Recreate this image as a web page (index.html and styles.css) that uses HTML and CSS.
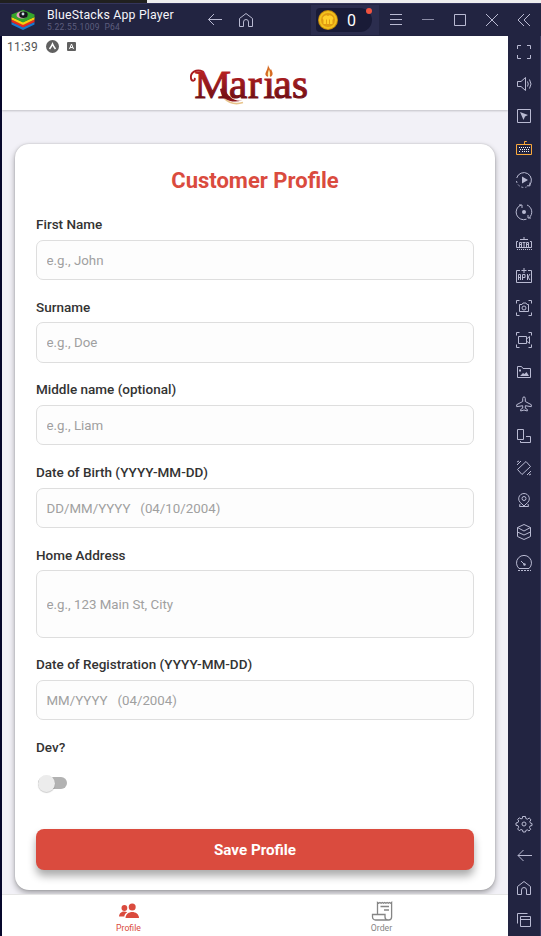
FILE: index.html
```html
<!DOCTYPE html>
<html lang="en">
<head>
<meta charset="utf-8">
<title>BlueStacks App Player</title>
<link rel="stylesheet" href="styles.css">
</head>
<body>
<div class="desktop-strip"></div>
<header class="titlebar">
  <svg class="bs-logo" width="24" height="22" viewBox="0 0 24 22"><path d="M.5 13v2.500L12 21l11.500-5.500V13L12 18z" fill="#1679cf"/><path d="M.5 10.500V13L12 18.500 23.500 13v-2.500L12 15.500z" fill="#e52b20"/><path d="M.5 8v2.500L12 16l11.500-5.500V8L12 13z" fill="#f7cf10"/><path d="M.5 5.500V8L12 13.500 23.500 8V5.500L12 .8z" fill="#35a52c"/><ellipse cx="11" cy="6" rx="5.500" ry="3.600" fill="#e9a1c2"/><ellipse cx="12.500" cy="5.700" rx="4.300" ry="3.200" fill="#14161c"/><circle cx="12" cy="5" r="1.400" fill="#cfe1e7"/></svg>
  <div class="app-id"><div class="app-name">BlueStacks App Player</div><div class="app-version">5.22.55.1009&nbsp; P64</div></div>
  <div class="history">
    <svg width="16" height="16" viewBox="0 0 16 16"><path d="M1.500 7.500h13.500M7 2L1.500 7.500 7 13"/></svg>
    <svg width="16" height="16" viewBox="0 0 16 16"><path d="M1.500 14.500v-8L8 1.500l6.500 5v8h-4V10a2.500 2.500 0 0 0-5 0v4.500z"/></svg>
  </div>
  <div class="coins"><div class="coin-pill">
    <svg width="20" height="20" viewBox="0 0 20 20"><circle cx="10" cy="10" r="10" fill="#c58a0c"/><circle cx="10" cy="10" r="9" fill="#f2c21d"/><circle cx="10" cy="10" r="7" fill="#df9b13"/><path d="M4.500 8q1.500-3 4-2.800L10 6l1.500-.8q2.500-.2 4 2.800l-1 2v4h-2.600V9.500H11V14H9V9.500h-.9V14H5.500v-4z" fill="#ffd02a"/></svg>
    <span>0</span></div><i class="alert-dot"></i></div>
  <div class="window-controls">
    <svg width="14" height="14" viewBox="0 0 14 14"><path d="M1 1.500h12M1 6.500h12M1 11.500h12"/></svg>
    <svg width="14" height="14" viewBox="0 0 14 14"><path d="M1 6.500h12" opacity=".7"/></svg>
    <svg width="14" height="14" viewBox="0 0 14 14"><path d="M1.500 1.500h11v11h-11z"/></svg>
    <svg width="14" height="14" viewBox="0 0 14 14"><path d="M1 1l12 12M13 1L1 13"/></svg>
    <svg width="14" height="14" viewBox="0 0 14 14"><path d="M7 1L1 7l6 6M13 1L7 7l6 6"/></svg>
  </div>
</header>
<div class="workspace">
  <main class="phone">
    <div class="app-header">
      <div class="status"><span>11:39</span>
        <svg width="13" height="13" viewBox="0 0 13 13"><circle cx="6.500" cy="6.500" r="6.500" fill="#606060"/><path d="M3.500 9Q5.300 6.800 6.500 4q1.200 2.800 3 5" fill="none" stroke="#fff" stroke-width="1.600"/></svg>
        <svg width="9" height="9" viewBox="0 0 9 9"><rect width="9" height="9" rx="1" fill="#606060"/><path d="M2.500 7l2-5 2 5M3.200 5.500h2.600" fill="none" stroke="#fff"/></svg>
      </div>
      <svg class="brand" width="126" height="52" viewBox="0 -5 126 52">
        <defs><linearGradient id="wine" x1="0" y1="0" x2="0" y2="1"><stop offset=".25" stop-color="#b62022"/><stop offset=".8" stop-color="#741016"/></linearGradient></defs>
        <path d="M34 30c2 9 12 12.500 21 9.500" fill="none" stroke="#e8c48b" stroke-width="1.600"/>
        <path d="M15 8.500C8 5.500 2 9.500 3 15.500c.5 3 4.200 2.800 3.800.2" fill="none" stroke="#aa1c1f" stroke-width="1.900" stroke-linecap="round"/>
        <path d="M32 26c1 10 11 15 22 11.500-8 1-15-4-17.500-13z" fill="#8d151a"/>
        <text class="brand-text" x="6.500 41 60 75.500 85.500 104" y="34.500" fill="url(#wine)" stroke="url(#wine)">Marias</text>
        <path d="M75 2h12v12.500H75z" fill="#fff"/>
        <path d="M79.500 14c-5-3 .5-6 .5-12 1 3 2 3 2 5l1-1c2 4 2.500 6-.5 8l-1.500-3z" fill="#d66b22"/><path d="M81 6.500c1 3 2 5 0 7.500-2-2-1-5 0-7.500z" fill="#fff0b1"/>
      </svg>
    </div>
    <div class="content">
      <form class="card">
        <h1>Customer Profile</h1>
        <label class="field"><span>First Name</span><input placeholder="e.g., John"></label>
        <label class="field"><span>Surname</span><input placeholder="e.g., Doe"></label>
        <label class="field"><span>Middle name (optional)</span><input placeholder="e.g., Liam"></label>
        <label class="field"><span>Date of Birth (YYYY-MM-DD)</span><input placeholder="DD/MM/YYYY &nbsp; (04/10/2004)"></label>
        <label class="field address"><span>Home Address</span><input placeholder="e.g., 123 Main St, City"></label>
        <label class="field"><span>Date of Registration (YYYY-MM-DD)</span><input placeholder="MM/YYYY &nbsp; (04/2004)"></label>
        <div class="field dev"><span>Dev?</span><div class="switch"></div></div>
        <button type="button">Save Profile</button>
      </form>
    </div>
    <nav class="tabs">
      <a class="tab active"><svg width="20" height="16" viewBox="0 0 20 16"><g fill="currentColor"><circle cx="13.200" cy="4" r="3.500"/><path d="M6.500 15c.3-8 13.200-8 13.500 0z"/><circle cx="5.400" cy="5" r="2.900"/><path d="M0 13.500C.5 8.500 5 7.700 8.300 9.300 6 10.500 5.600 12 5.300 13.500z"/></g></svg><span>Profile</span></a>
      <a class="tab"><svg width="22" height="20" viewBox="0 0 22 20"><path d="M6.500 13V1.500l1.200.8 1.200-.8 1.200.8 1.200-.8 1.200.8 1.200-.8 1.200.8 1.200-.8 1.200.8 1.200-.8 1.200.8.900-.8V16a3 3 0 0 1-3 3H4.500a3 3 0 0 1-3-3v-2.500H14V16q0 3 3 3M9.500 5.500H18M13 9h5" fill="none" stroke="currentColor" stroke-width="1.300"/></svg><span>Order</span></a>
    </nav>
  </main>
  <aside class="rail">
    <div class="tools">
      <svg viewBox="0 0 32 32"><path d="M9.500 13V9.500H13M19 9.500h3.500V13M22.500 19v3.500H19M13 22.500H9.500V19"/></svg>
      <svg viewBox="0 0 32 32"><path d="M9.500 13.500H13l4.500-4v13l-4.500-4H9.500zM19.500 13.500q1.500 2.500 0 5M21.500 11.500q3 4.500 0 9"/></svg>
      <svg viewBox="0 0 32 32"><path d="M9.500 9.500h13v13h-13z"/><path class="solid" d="M12 12l8 3-3 1.500L15.500 20z"/></svg>
      <svg viewBox="0 0 32 32"><path class="orange" d="M8.500 12.500h15v10h-15zM16.500 12v-2.500h2.300"/><path class="keys" d="M11 15.500h11M12 17.500h9M11 19.500h2M14 19.500h5M20 19.500h2"/></svg>
      <svg viewBox="0 0 32 32"><path d="M8.700 14a7.500 7.500 0 1 1 12.600 7.300M22 18.500v3.300h-3"/><path d="M8.500 17a7.500 7.500 0 0 0 10 6" stroke-dasharray="2 2"/><path class="solid" d="M14 12.500l6 3.500-6 3.500z"/></svg>
      <svg viewBox="0 0 32 32"><path d="M13 9a7.500 7.500 0 0 0 5.500 14.200M11 9h3v3M19 9a7.500 7.500 0 0 1 2 12.800M23 22h-3v-3"/><circle class="solid" cx="16" cy="16" r="2"/></svg>
      <svg viewBox="0 0 32 32"><path d="M10 13.500H8.500v6h15v-6H22M16 9v3M12 11.500h8M11.500 19v-4.500h2V19M11.500 16.500h2M14.500 14.500h3M16 14.500V19M18.500 19v-4.500h2V19M18.500 16.500h2"/><path d="M9 21.500h15" stroke-dasharray="1 1"/></svg>
      <svg viewBox="0 0 32 32"><path d="M12 10.500H8.500v12h15v-12H20M16 8v5M13.500 10.500h5M10.500 20v-5.500h2V20M10.500 17.500h2M14.500 20v-5.500H17v3h-2.500M19.500 14v6M22 14l-2 3 2 3"/></svg>
      <svg viewBox="0 0 32 32"><path d="M8.500 11.500v-3h3M20.500 8.500h3v3M23.500 20.500v3h-3M11.500 23.500h-3v-3M11.500 12.500H14l1-1.500h3l1 1.500h1.500v7h-9z"/><circle cx="16" cy="16" r="2"/></svg>
      <svg viewBox="0 0 32 32"><path d="M8.500 11.500v-3h3M20.500 8.500h3v3M23.500 20.500v3h-3M11.500 23.500h-3v-3M10.500 12.500h8v7h-8zM18.500 15l3-2.500v7l-3-2.500z"/></svg>
      <svg viewBox="0 0 32 32"><path d="M9.500 10.500h4l1.500 2h7.500v9h-13z"/><path class="solid" d="M12 20l3-3 1.500 1 2-2 2.500 4zM11 13.500h2v2h-2z"/></svg>
      <svg viewBox="0 0 32 32"><path d="M14.700 13.500v-3q1.300-4 2.600 0v3l6 3.200v2l-6-1v2.500l2 1.200V23L16 22l-3.300 1v-1.600l2-1.200v-2.500l-6 1v-2z"/></svg>
      <svg viewBox="0 0 32 32"><path d="M9.500 9.500h6v10h-6zM18 16.500h4.500v6h-10V21"/></svg>
      <svg viewBox="0 0 32 32"><path d="M9.500 17.500l8.500-8 4.500 5-8.500 8zM9 13l4-4M9 10l2-1M19 23l4-4M21 23l2-1"/></svg>
      <svg viewBox="0 0 32 32"><path d="M14 20c-6-4-3-10.500 2-10.500S24 16 18 20l-2 2zM12 20l-.5 2.500h9L20 20"/><circle cx="16" cy="14.500" r="2"/></svg>
      <svg viewBox="0 0 32 32"><path d="M16 8.500l6.500 3L16 15l-6.500-3.500zM9.500 11.500v9L16 23.500l6.500-3v-9M9.500 16l6.500 3 6.500-3"/></svg>
      <svg viewBox="0 0 32 32"><path d="M11 20.500a7.500 7.500 0 1 1 10 0zM13 13l3 3"/><circle class="solid" cx="16.500" cy="16.500" r="1.200"/><path d="M10 22.500h13" stroke-dasharray="2 1"/></svg>
    </div>
    <div class="tools">
      <svg viewBox="0 0 32 32"><path d="M14.500 8.500h3l.3 2 1.700.7 1.700-1.200 1.800 1.800-1.200 1.700.7 1.700 1.500.3v2l-2 .5-.5 1.500 1.200 1.800-1.700 1.700-1.700-1.200-1.500.7-.3 1.500h-2.500l-.5-2-1.500-.5-1.800 1.200-1.500-1.700 1-1.700-.7-1.700-2-.3V15l2-.5.7-1.500-1-1.700 1.500-1.500 1.800 1.100 1.500-.6z"/><circle cx="16" cy="16" r="2"/></svg>
      <svg viewBox="0 0 32 32"><path d="M10 15.500h14M15.500 10L10 15.500l5.500 5.500"/></svg>
      <svg viewBox="0 0 32 32"><path d="M9.500 22.500v-8l6.500-5 6.500 5v8h-4V18a2.500 2.500 0 0 0-5 0v4.500z"/></svg>
      <svg viewBox="0 0 32 32"><path d="M9.500 19.500v-10h10M12.500 12.500h10v10h-10zM12.500 15.500h10"/></svg>
    </div>
  </aside>
</div>
</body>
</html>
```

FILE: styles.css
```css
* { box-sizing: border-box; }
body { margin: 0; width: 541px; height: 936px; overflow: hidden; font-family: Roboto, sans-serif; background: #222441; display: flex; flex-direction: column; }
svg { display: block; flex: none; }
.desktop-strip { height: 3px; flex: none; background: linear-gradient(90deg, #20201f 147px, #eeeeee 147px); }
.titlebar { height: 33px; flex: none; display: flex; align-items: center; padding: 0 9px 0 11px; border-top: 1px solid #34355b; background: #222441; }
.app-id { width: 150px; padding-left: 12px; margin-top: -1px; white-space: nowrap; }
.app-name { color: #f5f5fa; font-size: 12.300px; line-height: 14px; letter-spacing: .2px; }
.app-version { color: #5d5e7e; font-size: 8.500px; line-height: 10px; letter-spacing: .25px; }
.history { display: flex; gap: 15px; padding-left: 22px; width: 126px; }
.history svg, .window-controls svg, .rail svg { fill: none; stroke: #b9bad2; stroke-width: 1; }
.coins { position: relative; width: 68px; height: 30px; background: #2b2d4e; display: flex; align-items: center; padding-left: 5px; }
.coin-pill { width: 56px; height: 24px; border-radius: 4px 12px 12px 4px; background: #191b37; display: flex; align-items: center; gap: 9px; padding-left: 2px; color: #fff; font-size: 16px; }
.alert-dot { position: absolute; top: 3px; right: 7px; width: 6px; height: 6px; border-radius: 50%; background: #f0533f; }
.window-controls { display: flex; gap: 18px; padding-left: 10px; }
.workspace { display: flex; height: 900px; border-left: 2px solid #07082c; }
.phone { width: 506px; height: 900px; background: #f2f1f7; display: flex; flex-direction: column; }
.app-header { height: 74px; flex: none; background: #fff; box-shadow: 0 1px 2px #0003; display: flex; flex-direction: column; align-items: center; }
.status { align-self: stretch; height: 21px; display: flex; align-items: center; gap: 8px; padding-left: 5px; font-size: 12px; letter-spacing: .2px; color: #555; }
.brand { margin-top: 1px; margin-left: -8px; }
.brand-text { font: 41px "Liberation Serif", serif; stroke-width: 1.100px; }
.content { height: 784px; overflow: hidden; padding: 34px 13px 0; }
.card { width: 480px; height: 746px; border-radius: 14px; background: #fff; padding: 21px 21px 0; box-shadow: 0 3px 6px #0005, 0 0 2px #0003; }
h1 { margin: 0 0 17px; font-size: 22px; line-height: 32px; text-align: center; color: #da4b3e; font-weight: 700; }
.field { display: block; height: 82.700px; }
.field span { display: block; font-size: 13.500px; line-height: 20px; font-weight: 500; color: #333; }
.field input { display: block; width: 438px; height: 40.500px; margin: 5.500px 0 0; padding: 1px 9.500px 0; border: 1px solid #dedede; border-radius: 7px; background: #fdfdfd; font: 13.300px Roboto, sans-serif; }
.field input::placeholder { color: #a0a0a0; opacity: 1; }
.address { height: 109.700px; }
.address input { height: 67.500px; }
.dev { height: 91.500px; }
.switch { width: 29px; height: 12px; margin: 20px 0 0 2px; border-radius: 6px; background: #b2b2b2; display: flex; align-items: center; }
.switch::before { content: ""; width: 17px; height: 17px; flex: none; border-radius: 50%; background: #ececec; box-shadow: 0 1px 1px #0003; }
button { display: block; width: 438px; height: 41px; border: 0; border-radius: 8px; background: #da4b3e; color: #fff; font: 700 15.200px Roboto, sans-serif; padding: 1px 0 0; box-shadow: 0 6px 9px #0005; }
.tabs { height: 42px; display: flex; background: #fff; border-top: 1px solid #e5e5e5; }
.tab { flex: 1; display: flex; flex-direction: column; align-items: center; color: #858585; font-size: 8.700px; line-height: 11px; padding-top: 6px; }
.tab span { margin-top: 2px; }
.active { color: #da4b3e; padding-top: 8px; }
.active span { margin-top: 4px; }
.rail { width: 33px; display: flex; flex-direction: column; justify-content: space-between; background: #222441; border-right: 1px solid #3b3c62; }
.rail svg { width: 32px; height: 32px; }
.rail .solid { fill: #b9bad2; stroke: none; }
.rail .orange { stroke: #f9a83c; }
.rail .keys { stroke: #f5f5f5; stroke-dasharray: 1 1; }
```
